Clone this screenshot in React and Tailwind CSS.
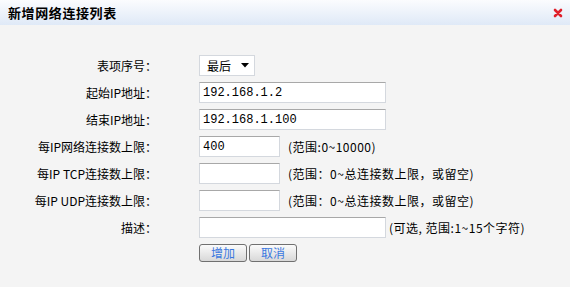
const font = { fontFamily: '"Noto Sans CJK SC", "Liberation Sans", sans-serif' };

const Row = ({ label, children }) => (
  <div className="flex items-center h-[21px]">
    <div className="w-[158px] text-right pr-[1px] text-[12px] text-black whitespace-nowrap">{label}</div>
    <div className="ml-[41px] flex items-center h-full">{children}</div>
  </div>
);

const Input = ({ width, value }) => (
  <input
    defaultValue={value}
    className={`${width} h-[21px] bg-white border border-[#d4d8de] border-t-[#a8a8a8] px-[3px] text-[12px] text-black outline-none font-['Liberation_Mono',monospace]`}
  />
);

const Hint = ({ children, className = "" }) => (
  <span className={`text-[12px] text-black whitespace-nowrap tracking-[0.5px] ${className}`}>{children}</span>
);

const Button = ({ children }) => (
  <button className="w-[48px] h-[18px] rounded-[3px] border border-[#707070] bg-gradient-to-b from-[#fbfbfb] to-[#d8d8d8] text-[12px] leading-none text-[#3a78e0]">
    {children}
  </button>
);

export default function App() {
  return (
    <div className="w-[570px] h-[287px] bg-[#f4f4f4] overflow-hidden" style={font}>
      {/* Title bar */}
      <div className="h-[25px] flex items-center justify-between pl-[8px] pr-[7px] bg-gradient-to-b from-[#fbfcfe] to-[#dfe9f7]">
        <span className="text-[13px] font-bold text-black tracking-[0.6px]">新增网络连接列表</span>
        <svg width="10" height="10" viewBox="0 0 10 10" className="mt-[1px]">
          <path d="M2 2 L8 8 M8 2 L2 8" stroke="#e0202a" strokeWidth="2.6" strokeLinecap="round" />
        </svg>
      </div>

      <div className="pt-[30px] flex flex-col gap-[6px]">
        <Row label="表项序号：">
          <div className="w-[56px] h-[21px] bg-white border border-[#d4d8de] flex items-center justify-between pl-[7px] pr-[5px] text-[12px] text-black">
            <span>最后</span>
            <svg width="8" height="5" viewBox="0 0 8 5">
              <path d="M0 0 H8 L4 4.5 Z" fill="#000" />
            </svg>
          </div>
        </Row>
        <Row label="起始IP地址：">
          <Input width="w-[187px]" value="192.168.1.2" />
        </Row>
        <Row label="结束IP地址：">
          <Input width="w-[187px]" value="192.168.1.100" />
        </Row>
        <Row label="每IP网络连接数上限：">
          <Input width="w-[81px]" value="400" />
          <Hint className="ml-[8px]">(范围:0~10000)</Hint>
        </Row>
        <Row label="每IP TCP连接数上限：">
          <Input width="w-[81px]" value="" />
          <Hint className="ml-[8px]">(范围：0~总连接数上限，或留空)</Hint>
        </Row>
        <Row label="每IP UDP连接数上限：">
          <Input width="w-[81px]" value="" />
          <Hint className="ml-[8px]">(范围：0~总连接数上限，或留空)</Hint>
        </Row>
        <Row label="描述：">
          <Input width="w-[187px]" value="" />
          <Hint className="ml-[3px]">(可选, 范围:1~15个字符)</Hint>
        </Row>
        <div className="flex gap-[2px] ml-[199px] h-[18px]">
          <Button>增加</Button>
          <Button>取消</Button>
        </div>
      </div>
    </div>
  );
}
